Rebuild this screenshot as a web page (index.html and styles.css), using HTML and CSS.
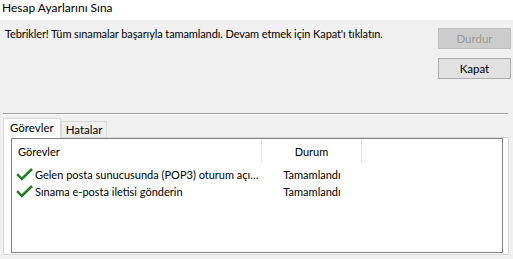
FILE: index.html
```html
<!DOCTYPE html>
<html lang="tr">

<head>
    <meta charset="UTF-8">
    <meta name="viewport" content="width=device-width, initial-scale=1.0">
    <title>Hesap Ayarlarını Sına</title>
    <link rel="stylesheet" href="styles.css">
</head>

<body>
    <div class="title">Hesap Ayarlarını Sına</div>

    <div class="top">
        <p class="msg">Tebrikler! Tüm sınamalar başarıyla tamamlandı. Devam etmek için Kapat'ı tıklatın.</p>
        <div class="btns">
            <button class="btn" disabled>Durdur</button>
            <button class="btn">Kapat</button>
        </div>
    </div>

    <div class="sep"></div>

    <div class="tabs">
        <span class="tab active">Görevler</span>
        <span class="tab">Hatalar</span>
    </div>

    <div class="page">
        <div class="list">
            <div class="row head">
                <span class="c1">Görevler</span>
                <span class="c2">Durum</span>
            </div>
            <div class="rows">
                <div class="row">
                    <span class="c1"><svg class="ok" viewBox="0 0 17 13"><path d="M1.2 6.2 L5.8 11 L16 1" /></svg><span class="txt">Gelen posta sunucusunda (POP3) oturum açılıyor</span></span>
                    <span class="c2">Tamamlandı</span>
                </div>
                <div class="row">
                    <span class="c1"><svg class="ok" viewBox="0 0 17 13"><path d="M1.2 6.2 L5.8 11 L16 1" /></svg><span class="txt">Sınama e-posta iletisi gönderin</span></span>
                    <span class="c2">Tamamlandı</span>
                </div>
            </div>
        </div>
    </div>
</body>

</html>
```

FILE: styles.css
```css
* {
    margin: 0;
    padding: 0;
    box-sizing: border-box;
}

body {
    width: 513px;
    height: 259px;
    background: #f0f0f0;
    font-family: Lato, "Open Sans", sans-serif;
    font-size: 11px;
    color: #000;
    overflow: hidden;
}

.title {
    height: 20px;
    line-height: 16px;
    padding-left: 2px;
    font-size: 12px;
    background: #fff;
}

.top {
    display: flex;
    height: 93px;
    padding: 7px 2px 0 5px;
}

.msg {
    flex: 1;
    line-height: 14px;
    letter-spacing: -0.1px;
    white-space: nowrap;
}

.btns {
    display: flex;
    flex-direction: column;
    gap: 9px;
    padding-top: 1px;
}

.btn {
    width: 73px;
    height: 21px;
    font: inherit;
    font-size: 11.5px;
    background: #e1e1e1;
    border: 1px solid #adadad;
    color: #000;
}

.btn:disabled {
    background: #cccccc;
    border-color: #bfbfbf;
    color: #9a9a9a;
}

.sep {
    margin: 0 5px 0 3px;
    border-top: 1px solid #a0a0a0;
    border-bottom: 1px solid #fff;
}

.tabs {
    display: flex;
    align-items: flex-end;
    height: 19px;
    margin-top: 3px;
    padding-left: 3px;
}

.tab {
    height: 16px;
    line-height: 15px;
    padding: 0 4px;
    font-size: 11.5px;
    background: #f0f0f0;
    border: 1px solid #d9d9d9;
    border-bottom: none;
}

.tab.active {
    height: 20px;
    line-height: 17px;
    padding: 0 6px;
    margin-bottom: -1px;
    background: #fff;
    position: relative;
    z-index: 1;
}

.page {
    width: 506px;
    height: 118px;
    margin-left: 3px;
    background: #fff;
    border: 1px solid #d9d9d9;
    padding: 0 5px 1px 7px;
}

.list {
    height: 115px;
    background: #fff;
    border: 1px solid #828282;
}

.row {
    display: flex;
    height: 17px;
    line-height: 17px;
}

.row.head {
    height: 24px;
    line-height: 26px;
}

.head span {
    border-right: 1px solid #e5e5e5;
}

.rows {
    padding-top: 3px;
}

.c1 {
    width: 250px;
    padding-left: 6px;
}

.rows .c1 {
    display: flex;
    align-items: center;
    padding: 0 3px 0 4px;
}

.txt {
    min-width: 0;
    white-space: nowrap;
    overflow: hidden;
    text-overflow: ellipsis;
}

.c2 {
    width: 100px;
    text-align: center;
}

.ok {
    width: 17px;
    height: 13px;
    margin-right: 2px;
    flex-shrink: 0;
}

.ok path {
    fill: none;
    stroke: #1f801f;
    stroke-width: 2.5;
}
```
